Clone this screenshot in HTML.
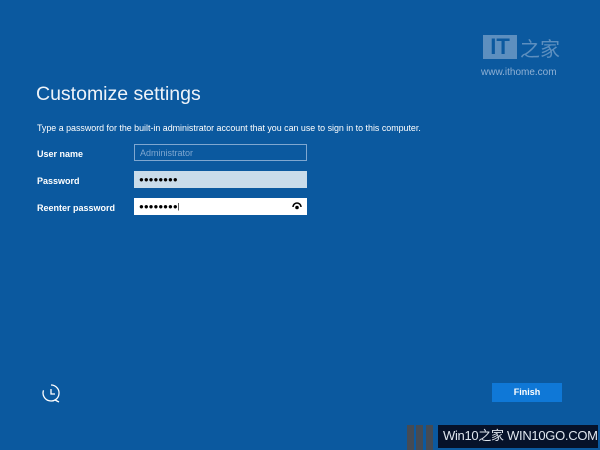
<!DOCTYPE html>
<html><head><style>
html,body{margin:0;width:600px;height:450px;overflow:hidden}
body{background:#0b599f;position:relative;font-family:"Liberation Sans",sans-serif;color:#fff}
.a{position:absolute;white-space:nowrap}
.lbl{font-size:9px;font-weight:bold;left:37px}
.box{left:134px;width:173px;height:17px;font-size:9px;line-height:17px;padding-left:5px;box-sizing:border-box}
</style></head><body>
<div class="a" style="left:483px;top:35px;width:34px;height:24px;background:#5d8fbf;color:#0b599f;font-weight:bold;font-size:22px;line-height:24px;text-align:center">IT</div>
<div class="a" style="left:520px;top:33px;font-size:20px;color:#5d8fbf;font-family:'Noto Sans CJK SC',sans-serif">之家</div>
<div class="a" style="left:481px;top:67px;font-size:10px;color:#8fb0d4">www.ithome.com</div>
<div class="a" style="left:36px;top:83px;font-size:19.5px;font-weight:normal;color:#eef3f9">Customize settings</div>
<div class="a" style="left:37px;top:123px;font-size:8.9px">Type a password for the built-in administrator account that you can use to sign in to this computer.</div>
<div class="a lbl" style="top:149px">User name</div>
<div class="a lbl" style="top:176px">Password</div>
<div class="a lbl" style="top:203px">Reenter password</div>
<div class="a box" style="top:144px;border:1px solid #7fa7d0;color:#7fa7d0">Administrator</div>
<div class="a box" style="top:171px;background:#c9dcea;color:#000;font-size:8px">●●●●●●●●</div>
<div class="a box" style="top:198px;background:#fff;color:#000;font-size:8px">●●●●●●●●|<svg style="position:absolute;right:5px;top:4px" width="10" height="8" viewBox="0 0 10 8"><path d="M1 5a4 4 0 0 1 8 0" fill="none" stroke="#000" stroke-width="1.6"/><circle cx="5" cy="5.5" r="1.8" fill="#000"/></svg></div>
<svg class="a" style="left:40px;top:382px" width="22" height="22" viewBox="0 0 22 22" fill="none" stroke="#fff" stroke-width="1.3"><path d="M11 3a8 8 0 1 1-7.5 5.3"/><path d="M11 7v5h4"/><path d="M15 18l4 2"/></svg>
<div class="a" style="left:492px;top:383px;width:70px;height:19px;background:#0f78d7;font-size:9px;font-weight:bold;text-align:center;line-height:19px">Finish</div>
<div class="a" style="left:407px;top:425px;width:7px;height:25px;background:#444b55"></div>
<div class="a" style="left:416px;top:425px;width:7px;height:25px;background:#444b55"></div>
<div class="a" style="left:426px;top:425px;width:7px;height:25px;background:#444b55"></div>
<div class="a" style="left:438px;top:425px;width:160px;height:23px;background:#06122a;color:#dfe6ee;font-size:13px;line-height:22px;padding-left:5px;box-sizing:border-box;overflow:hidden;letter-spacing:-0.3px;font-family:'Liberation Sans','Noto Sans CJK SC',sans-serif">Win10之家 WIN10GO.COM</div>
</body></html>
